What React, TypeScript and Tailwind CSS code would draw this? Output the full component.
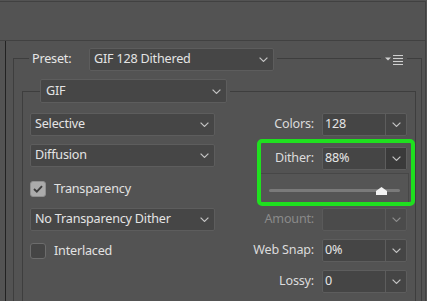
import React from 'react';

function Chevron({ dim = false }: { dim?: boolean }) {
  return (
    <svg width="9" height="5" viewBox="0 0 9 5" className="shrink-0">
      <polyline
        points="0.6,0.6 4.5,4.4 8.4,0.6"
        fill="none"
        stroke={dim ? '#8c8c8c' : '#c4c4c4'}
        strokeWidth="1.2"
      />
    </svg>
  );
}

function Dropdown({ label, className = '' }: { label: string; className?: string }) {
  return (
    <div
      className={`flex h-[23px] items-center justify-between rounded-[2px] border border-[#5d5d5d] bg-[#464646] pl-[4px] pr-[5px] text-[#e4e4e4] ${className}`}
    >
      <span>{label}</span>
      <Chevron />
    </div>
  );
}

function Checkbox({ checked, label }: { checked: boolean; label: string }) {
  return (
    <div className="flex h-[16px] items-center">
      {checked ? (
        <div className="flex h-[16px] w-[16px] items-center justify-center rounded-[3px] border border-[#8f8f8f] bg-[#ababab]">
          <svg width="10" height="8" viewBox="0 0 10 8">
            <polyline points="1,4 3.8,6.6 9,1.2" fill="none" stroke="#3d3d3d" strokeWidth="1.9" />
          </svg>
        </div>
      ) : (
        <div className="h-[16px] w-[16px] rounded-[3px] border-[1.5px] border-[#6c6c6c] bg-[#454545]" />
      )}
      <span className="ml-[8px] text-[#e2e2e2]">{label}</span>
    </div>
  );
}

function Field({
  label,
  value,
  disabled = false,
  active = false,
}: {
  label: string;
  value: string;
  disabled?: boolean;
  active?: boolean;
}) {
  return (
    <div className="flex h-[23px] items-center justify-end">
      <span className={disabled ? 'text-[#8a8a8a]' : 'text-[#dcdcdc]'}>{label}</span>
      <div
        className={`ml-[8px] flex h-[23px] w-[85px] rounded-[2px] border ${
          disabled ? 'border-[#5a5a5a] bg-[#4b4b4b]' : 'border-[#5d5d5d] bg-[#454545]'
        }`}
      >
        <div className="flex flex-1 items-center pl-[2px] text-[#e6e6e6]">{value}</div>
        <div
          className={`flex w-[21px] items-center justify-center border-l ${
            disabled ? 'border-[#5a5a5a]' : 'border-[#5d5d5d]'
          } ${active ? 'bg-[#3a3a3a]' : ''}`}
        >
          <Chevron dim={disabled} />
        </div>
      </div>
    </div>
  );
}

export default function App() {
  return (
    <div className="relative flex h-[301px] w-[427px] flex-col overflow-hidden bg-[#535353] font-['Noto_Sans',sans-serif] text-[12.6px] leading-none tracking-[-0.2px]">
      {/* top strip */}
      <div className="mr-px mt-px h-[40px] shrink-0 border-y border-r border-[#414141]" />

      <div className="mr-px flex flex-1 border-r border-[#414141]">
        <div className="w-[5px] shrink-0" />
        <div className="w-px shrink-0 bg-[#222222]" />

        <div className="flex-1 pl-[7px] pr-[3px]">
          {/* Preset group */}
          <div className="mt-[17px] h-[260px] border-x border-t border-[#3e3e3e]">
            <div className="-mt-[11px] flex h-[23px] items-center">
              <div className="ml-[15px] flex items-center bg-[#535353] px-[3px]">
                <span className="w-[57px] text-[#e6e6e6]">Preset:</span>
                <Dropdown label="GIF 128 Dithered" className="w-[185px]" />
              </div>
              <div className="flex-1" />
              <div className="mr-[14px] flex h-[12px] w-[26px] items-center justify-center bg-[#535353]">
                <svg width="18" height="10" viewBox="0 0 18 10">
                  <polygon points="0,2.5 6,2.5 3,5.5" fill="#d0d0d0" />
                  <line x1="8" y1="0.5" x2="18" y2="0.5" stroke="#d0d0d0" strokeWidth="1.1" />
                  <line x1="8" y1="3.5" x2="18" y2="3.5" stroke="#d0d0d0" strokeWidth="1.1" />
                  <line x1="8" y1="6.5" x2="18" y2="6.5" stroke="#d0d0d0" strokeWidth="1.1" />
                  <line x1="8" y1="9.5" x2="18" y2="9.5" stroke="#d0d0d0" strokeWidth="1.1" />
                </svg>
              </div>
            </div>

            {/* GIF group */}
            <div className="ml-[8px] mr-[5px] mt-[20px] h-[230px] border-x border-t border-[#3e3e3e]">
              <div className="-mt-[13px] flex h-[24px]">
                <div className="ml-[17px] bg-[#535353] pr-[3px]">
                  <Dropdown label="GIF" className="h-[24px] w-[187px] pl-[5px]" />
                </div>
              </div>

              <div className="mt-[10px] flex">
                {/* left column */}
                <div className="ml-[7px] flex w-[185px] flex-col">
                  <Dropdown label="Selective" />
                  <Dropdown label="Diffusion" className="mt-[8px]" />
                  <div className="mt-[14px]">
                    <Checkbox checked label="Transparency" />
                  </div>
                  <Dropdown label="No Transparency Dither" className="mt-[11px]" />
                  <div className="mt-[12px]">
                    <Checkbox checked={false} label="Interlaced" />
                  </div>
                </div>

                {/* right column */}
                <div className="ml-auto mr-[8px] flex flex-col items-end">
                  <Field label="Colors:" value="128" />
                  <div className="mt-[11px]">
                    <Field label="Dither:" value="88%" active />
                  </div>
                  <div className="-mr-[2px] mt-[3px] h-[31px] w-[150px] border border-[#474747] bg-[#555555] pl-[9px] pr-[8px] pt-[15px]">
                    <div className="relative h-[3px] rounded-full bg-[#7a7a7a]">
                      <svg
                        width="11"
                        height="8"
                        viewBox="0 0 11 8"
                        className="absolute left-[107px] top-[-2px]"
                      >
                        <polygon points="5.5,0 11,4 11,8 0,8 0,4" fill="#f2f2f2" />
                      </svg>
                    </div>
                  </div>
                  <div className="mt-[4px]">
                    <Field label="Amount:" value="" disabled />
                  </div>
                  <div className="mt-[8px]">
                    <Field label="Web Snap:" value="0%" />
                  </div>
                  <div className="mt-[8px]">
                    <Field label="Lossy:" value="0" />
                  </div>
                </div>
              </div>
            </div>
          </div>
        </div>
      </div>

      {/* highlight drawn over the dither controls */}
      <div className="absolute left-[257px] top-[139px] h-[67px] w-[158px] rounded-[5px] border-[4px] border-[#1fe01f]" />
    </div>
  );
}
